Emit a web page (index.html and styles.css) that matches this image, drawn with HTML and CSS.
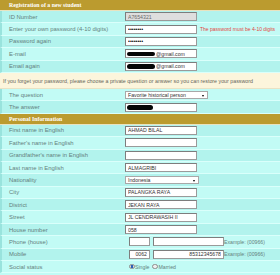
FILE: index.html
```html
<!DOCTYPE html>
<html lang="en">
<head>
  <meta charset="UTF-8">
  <title>Registration of a new student</title>
  <link rel="stylesheet" href="styles.css">
</head>
<body>
  <div class="form">
    <div class="section">Registration of a new student</div>

    <div class="row">
      <div class="label">ID Number</div>
      <div class="value"><input class="field locked" value="A7654321" readonly></div>
    </div>
    <div class="row alt">
      <div class="label">Enter your own password (4-10 digits)</div>
      <div class="value">
        <input class="field pass" type="password" value="12345678">
        <span class="error">The password must be 4-10 digits</span>
      </div>
    </div>
    <div class="row">
      <div class="label">Password again</div>
      <div class="value"><input class="field pass" type="password" value="12345678"></div>
    </div>
    <div class="row alt">
      <div class="label">E-mail</div>
      <div class="value">
        <span class="wrap"><input class="field mail" value="@gmail.com"><span class="redact"></span></span>
      </div>
    </div>
    <div class="row">
      <div class="label">Email again</div>
      <div class="value">
        <span class="wrap"><input class="field mail" value="@gmail.com"><span class="redact"></span></span>
      </div>
    </div>

    <div class="notice">If you forget your password, please choose a private question or answer so you can restore your password</div>

    <div class="row alt">
      <div class="label">The question</div>
      <div class="value"><span class="select wide">Favorite historical person</span></div>
    </div>
    <div class="row">
      <div class="label">The answer</div>
      <div class="value">
        <span class="wrap"><input class="field"><span class="redact short"></span></span>
      </div>
    </div>

    <div class="section">Personal Information</div>

    <div class="row">
      <div class="label">First name in English</div>
      <div class="value"><input class="field" value="AHMAD BILAL"></div>
    </div>
    <div class="row alt">
      <div class="label">Father's name in English</div>
      <div class="value"><input class="field"></div>
    </div>
    <div class="row">
      <div class="label">Grandfather's name in English</div>
      <div class="value"><input class="field"></div>
    </div>
    <div class="row alt">
      <div class="label">Last name in English</div>
      <div class="value"><input class="field" value="ALMAGRIBI"></div>
    </div>
    <div class="row">
      <div class="label">Nationality</div>
      <div class="value"><span class="select">Indonesia</span></div>
    </div>
    <div class="row alt">
      <div class="label">City</div>
      <div class="value"><input class="field" value="PALANGKA RAYA"></div>
    </div>
    <div class="row">
      <div class="label">District</div>
      <div class="value"><input class="field" value="JEKAN RAYA"></div>
    </div>
    <div class="row alt">
      <div class="label">Street</div>
      <div class="value"><input class="field" value="JL CENDRAWASIH II"></div>
    </div>
    <div class="row">
      <div class="label">House number</div>
      <div class="value"><input class="field" value="058"></div>
    </div>
    <div class="row alt">
      <div class="label">Phone (house)</div>
      <div class="value phone">
        <input class="field code">
        <input class="field number">
        <span class="hint">Example: (00966)</span>
      </div>
    </div>
    <div class="row">
      <div class="label">Mobile</div>
      <div class="value phone">
        <input class="field code" value="0062">
        <input class="field number" value="85312345678">
        <span class="hint">Example: (00966)</span>
      </div>
    </div>
    <div class="row alt">
      <div class="label">Social status</div>
      <div class="value phone">
        <label class="choice"><input type="radio" name="status" checked>Single</label>
        <label class="choice"><input type="radio" name="status">Married</label>
      </div>
    </div>
  </div>
</body>
</html>
```

FILE: styles.css
```css
body {
  margin: 0;
  font-family: 'Liberation Sans', Arial, sans-serif;
  font-size: 5.9px;
  background-color: #c0fbf5;
  color: #647f7d;
}

.form {
  width: 280px;
}

.section {
  height: 11px;
  line-height: 11px;
  padding-left: 9px;
  background-color: #bb9b2f;
  border-bottom: 1px solid #e9e3c0;
  box-sizing: border-box;
  color: #ffffff;
  font-family: 'Liberation Serif', 'Times New Roman', serif;
  font-weight: bold;
  font-size: 5.8px;
}

.row {
  display: grid;
  grid-template-columns: 123px 1fr;
  height: 12.4px;
  background-color: #b2f3ed;
  border-left: 2px solid #99e3dd;
  border-bottom: 1px solid #dafffb;
  box-sizing: border-box;
}

.row.alt {
  background-color: #c2fbf5;
}

.label {
  display: flex;
  align-items: center;
  padding-left: 7px;
  white-space: nowrap;
}

.value {
  display: flex;
  align-items: center;
  gap: 2px;
  white-space: nowrap;
}

.value.phone {
  padding-left: 4px;
  gap: 3px;
}

.field {
  width: 72px;
  height: 9px;
  margin: 0;
  padding: 0 2px;
  box-sizing: border-box;
  border: 1px solid #9a9a9a;
  border-top-color: #7d7d7d;
  border-left-color: #7d7d7d;
  background-color: #ffffff;
  font-family: 'Liberation Sans', Arial, sans-serif;
  font-size: 5.2px;
  color: #333333;
  outline: none;
}

.field.locked {
  background-color: #dedede;
  color: #6a6a6a;
}

.field.pass {
  font-size: 5.4px;
  color: #000000;
}

.field.mail {
  padding-left: 30px;
}

.wrap {
  position: relative;
  display: inline-flex;
}

.redact {
  position: absolute;
  left: 2px;
  top: 2.5px;
  width: 28px;
  height: 4.5px;
  background-color: #050505;
  border-radius: 3px;
}

.redact.short {
  width: 26px;
}

.error {
  margin-left: 1px;
  color: #e3453e;
  font-size: 5px;
}

.select {
  position: relative;
  width: 74px;
  height: 8px;
  line-height: 7px;
  padding-left: 2px;
  box-sizing: border-box;
  border: 1px solid #a8a8a8;
  background-color: #ffffff;
  color: #333333;
  font-size: 5.2px;
}

.select.wide {
  width: 83px;
}

.select::after {
  content: '';
  position: absolute;
  right: 3px;
  top: 3px;
  border-left: 1.5px solid transparent;
  border-right: 1.5px solid transparent;
  border-top: 2px solid #000000;
}

.field.code {
  width: 21px;
  text-align: right;
}

.field.number {
  width: 71px;
  text-align: right;
}

.hint {
  margin-left: -3px;
  font-size: 5.2px;
}

.choice {
  display: inline-flex;
  align-items: center;
  font-size: 5.2px;
}

.choice input {
  appearance: none;
  width: 5.5px;
  height: 5.5px;
  margin: 0 0.5px 0 0;
  border: 1px solid #8c8c8c;
  border-radius: 50%;
  background-color: #eeeeee;
  box-sizing: border-box;
}

.choice input:checked {
  background: radial-gradient(circle, #2c5fb8 0 1.2px, #dcdcdc 1.5px);
}

.notice {
  height: 16px;
  line-height: 16px;
  padding-left: 3px;
  background-color: #fcf5dc;
  border-bottom: 1px solid #e9e2c4;
  box-sizing: border-box;
  color: #66665a;
  font-size: 5.3px;
  white-space: nowrap;
}
```
